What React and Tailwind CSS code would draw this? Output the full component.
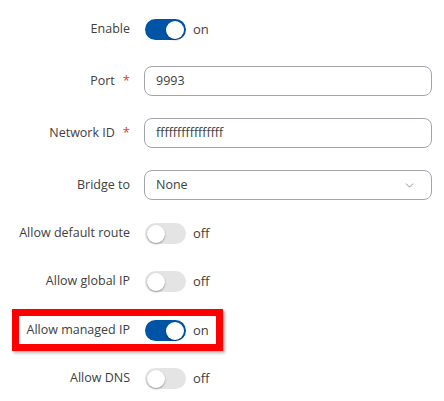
import { ChevronDown } from "lucide-react";

const Toggle = ({ on }) => {
  return (
    <div className="flex items-center">
      <div
        className={
          on
            ? "w-[41px] h-[21px] rounded-full bg-[#0054a6] flex items-center justify-end px-[2px]"
            : "w-[41px] h-[21px] rounded-full bg-[#e4e4e4] flex items-center justify-start px-[2px]"
        }
      >
        <div className="w-[18px] h-[18px] rounded-full bg-white shadow-[0_1px_2px_rgba(0,0,0,0.35)]" />
      </div>
      <span className="ml-[7px] text-[13px] text-[#404040]">{on ? "on" : "off"}</span>
    </div>
  );
};

const Label = ({ text, required }) => {
  return (
    <div className="w-[130px] shrink-0 flex justify-end items-center text-[12.5px] text-[#404040]">
      <span>{text}</span>
      {required && <span className="ml-[8px] text-[13px] text-[#e2401c]">*</span>}
    </div>
  );
};

const Field = ({ value, select }) => {
  return (
    <div className="w-[288px] h-[30px] border border-[#a3a3ab] rounded-[8px] flex items-center justify-between pl-[11px] pr-[15px] text-[12.5px] text-[#404040]">
      <span>{value}</span>
      {select && <ChevronDown size={13} strokeWidth={1.5} className="text-[#777]" />}
    </div>
  );
};

const App = () => {
  return (
    <div className="w-[444px] h-[401px] bg-white font-['Open_Sans',sans-serif] pt-[19px] flex flex-col">
      <div className="h-[21px] flex items-center gap-[15px]">
        <Label text="Enable" />
        <Toggle on />
      </div>
      <div className="mt-[26px] h-[30px] flex items-center gap-[14px]">
        <Label text="Port" required />
        <Field value="9993" />
      </div>
      <div className="mt-[22px] h-[30px] flex items-center gap-[14px]">
        <Label text="Network ID" required />
        <Field value="ffffffffffffffff" />
      </div>
      <div className="mt-[22px] h-[30px] flex items-center gap-[14px]">
        <Label text="Bridge to" />
        <Field value="None" select />
      </div>
      <div className="mt-[23px] h-[21px] flex items-center gap-[15px]">
        <Label text="Allow default route" />
        <Toggle />
      </div>
      <div className="mt-[27px] h-[21px] flex items-center gap-[15px]">
        <Label text="Allow global IP" />
        <Toggle />
      </div>
      <div className="relative mt-[28px] h-[21px] flex items-center gap-[15px]">
        <div className="absolute left-[12px] top-[-11px] w-[211px] h-[42px] border-[7px] border-[#ff0000] shadow-[2px_2px_3px_rgba(0,0,0,0.3)]" />
        <Label text="Allow managed IP" />
        <Toggle on />
      </div>
      <div className="mt-[27px] h-[21px] flex items-center gap-[15px]">
        <Label text="Allow DNS" />
        <Toggle />
      </div>
    </div>
  );
};

export default App;
